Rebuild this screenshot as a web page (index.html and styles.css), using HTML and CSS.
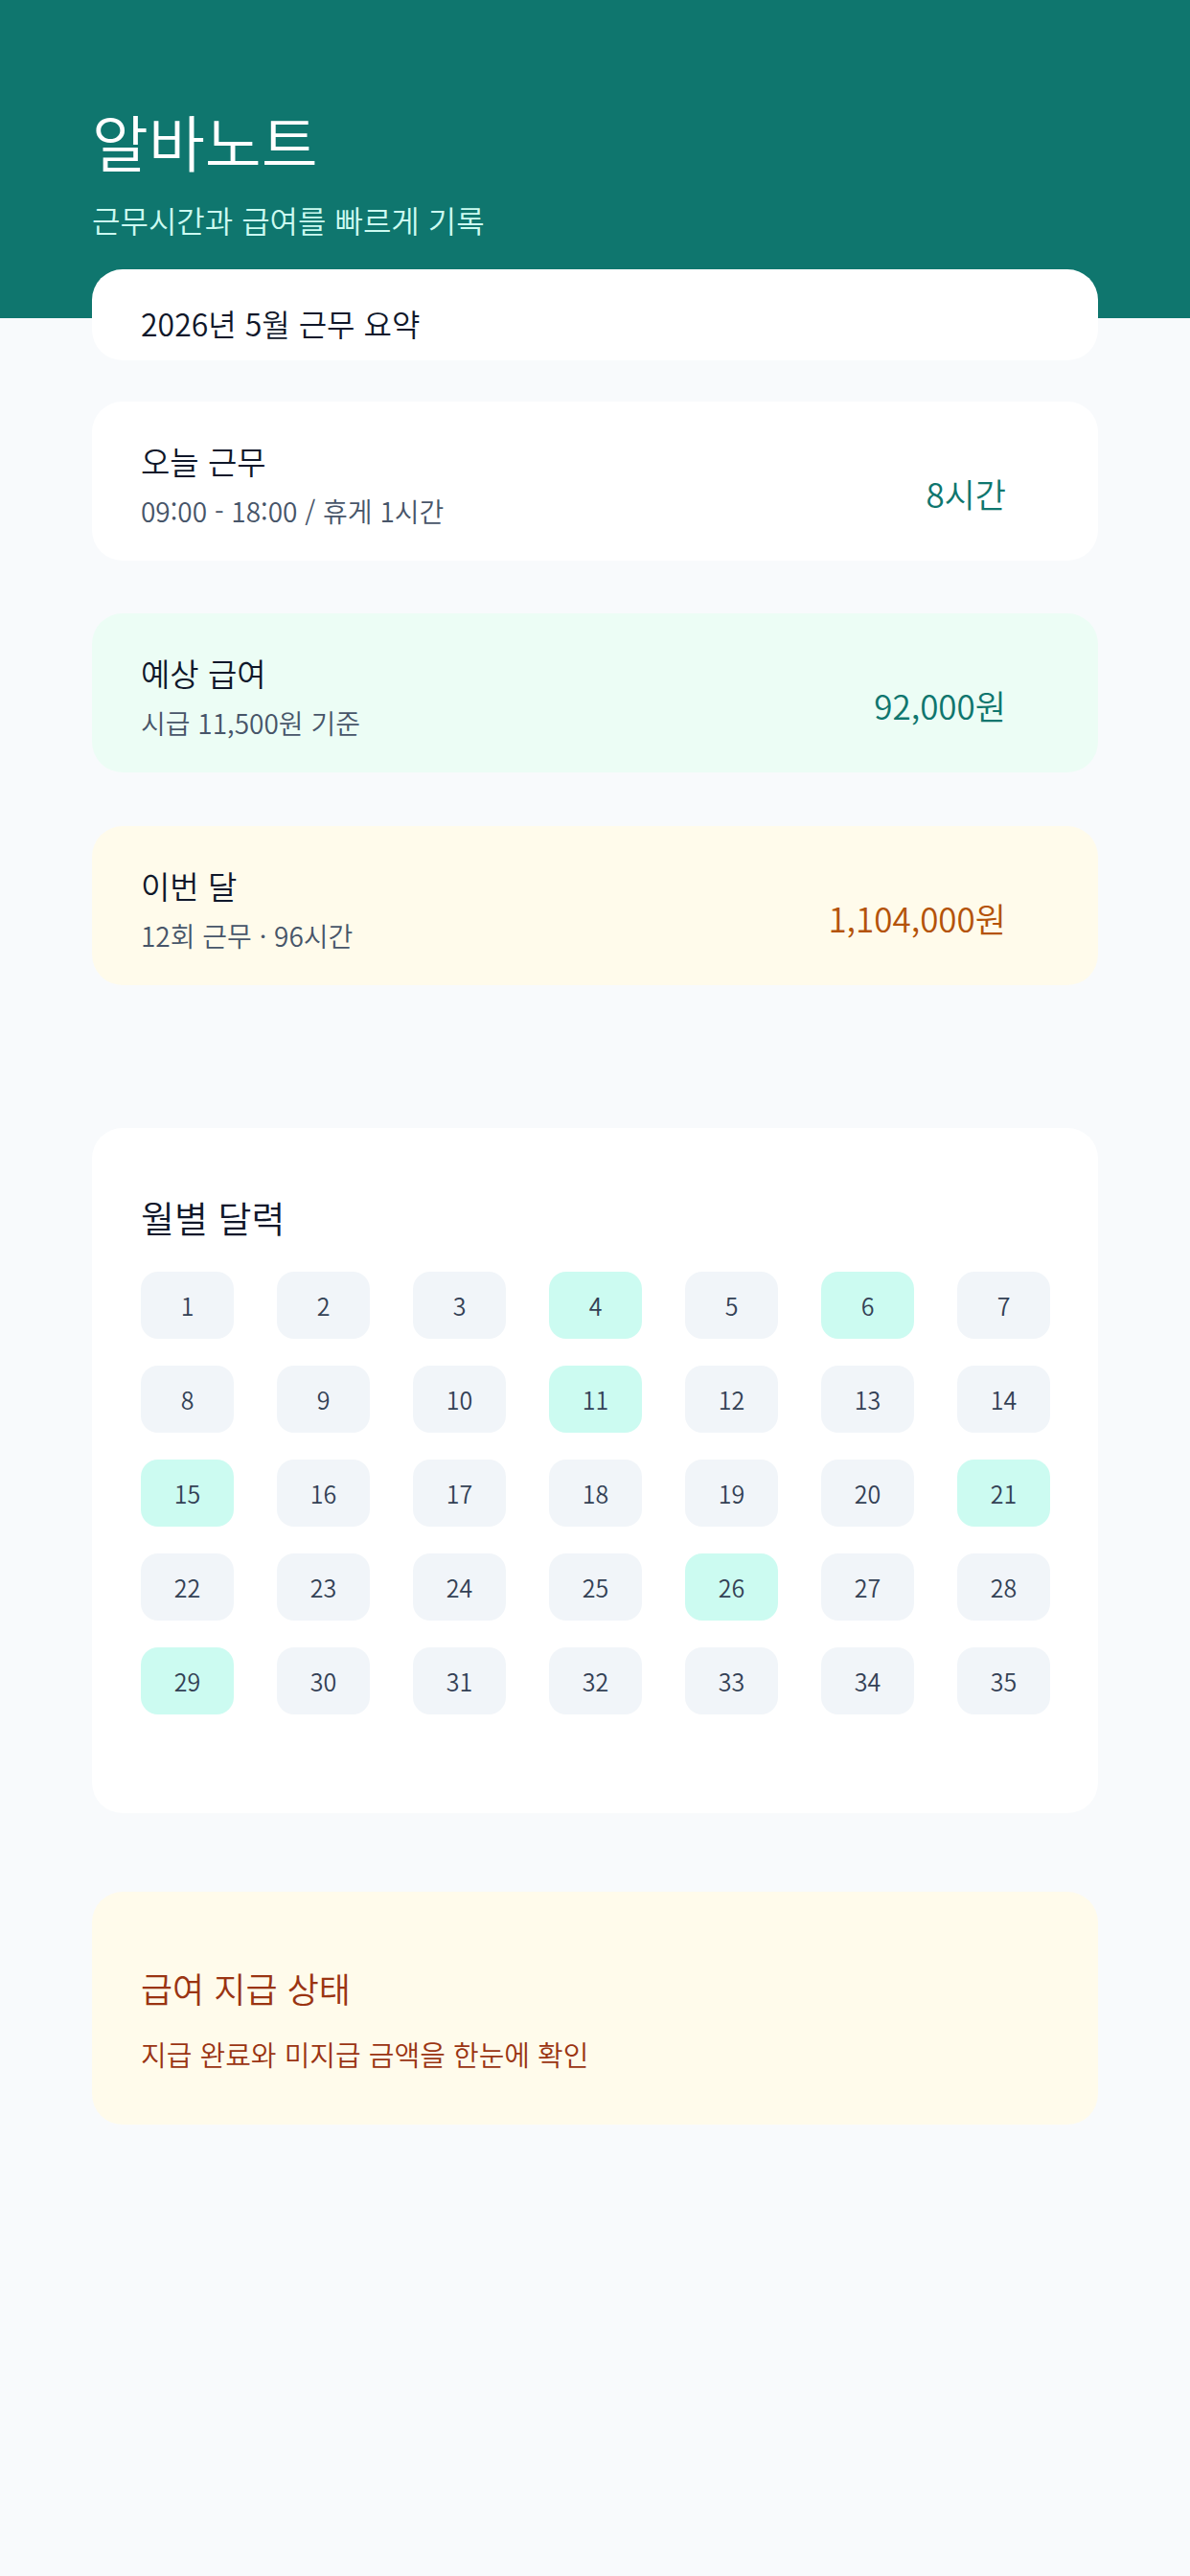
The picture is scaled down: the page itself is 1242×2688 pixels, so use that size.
FILE: index.html
```html
<!DOCTYPE html>
<html lang="ko">
<head>
  <meta charset="utf-8" />
  <title>알바노트</title>
  <meta name="viewport" content="width=device-width, initial-scale=1.0" />
  <link rel="stylesheet" href="styles.css">
</head>
<body>
  <header class="hero">
    <h1>알바노트</h1>
    <p>근무시간과 급여를 빠르게 기록</p>
  </header>

  <main class="content">
    <section class="card summary">2026년 5월 근무 요약</section>

    <section class="card stat today">
      <div>
        <div class="stat-title">오늘 근무</div>
        <div class="stat-sub">09:00 - 18:00 / 휴게 1시간</div>
      </div>
      <div class="stat-value teal">8시간</div>
    </section>

    <section class="card stat pay">
      <div>
        <div class="stat-title">예상 급여</div>
        <div class="stat-sub">시급 11,500원 기준</div>
      </div>
      <div class="stat-value teal">92,000원</div>
    </section>

    <section class="card stat month">
      <div>
        <div class="stat-title">이번 달</div>
        <div class="stat-sub">12회 근무 · 96시간</div>
      </div>
      <div class="stat-value orange">1,104,000원</div>
    </section>

    <section class="card calendar">
      <h2>월별 달력</h2>
      <div class="grid" id="grid"></div>
    </section>

    <section class="card status">
      <h2>급여 지급 상태</h2>
      <p>지급 완료와 미지급 금액을 한눈에 확인</p>
    </section>
  </main>

  <script>
    const worked = [4, 6, 11, 15, 21, 26, 29];
    const grid = document.getElementById("grid");
    for (let d = 1; d <= 35; d++) {
      const cell = document.createElement("div");
      cell.className = worked.includes(d) ? "day on" : "day";
      cell.textContent = d;
      grid.appendChild(cell);
    }
  </script>
</body>
</html>
```

FILE: styles.css
```css
body { margin: 0; background: #f8fafc; font-family: "Noto Sans CJK KR", "Noto Sans", sans-serif; font-weight: 350; color: #0f172a; }
h1, h2 { font-weight: 350; }

.hero { background: #0f766e; padding: 108px 96px 80px; }
.hero h1 { margin: 0; font-size: 64px; line-height: 76px; color: #fff; }
.hero p { margin: 22px 0 0; font-size: 32px; line-height: 46px; color: #ccfbf1; }

.content { padding: 0 96px 200px; margin-top: -51px; }
.card { background: #fff; border-radius: 32px; }

.summary { padding: 34px 51px 16px; font-size: 32px; line-height: 45px; }

.stat { display: flex; justify-content: space-between; align-items: center; padding: 40px 96px 32px 51px; }
.stat-title { font-size: 33px; line-height: 45px; }
.stat-sub { margin-top: 9px; font-size: 28px; line-height: 40px; color: #475569; }
.stat-value { margin-top: 18px; font-size: 35px; line-height: 48px; }
.teal { color: #0f766e; }
.orange { color: #b45309; }

.today { margin-top: 43px; }
.pay { margin-top: 55px; background: #ecfdf5; }
.month { margin-top: 56px; background: #fffbeb; }

.calendar { margin-top: 149px; padding: 68px 50px 103px 51px; }
.calendar h2 { margin: 0; font-size: 38px; line-height: 50px; }
.grid { margin-top: 32px; display: grid; grid-template-columns: repeat(7, 1fr); column-gap: 45px; row-gap: 28px; }
.day { height: 70px; border-radius: 18px; background: #f1f5f9; display: flex; align-items: center; justify-content: center; font-size: 25px; color: #334155; }
.day.on { background: #ccfbf1; }

.status { margin-top: 82px; padding: 76px 51px 54px; background: #fffbeb; color: #9a3412; }
.status h2 { margin: 0; font-size: 36px; line-height: 48px; }
.status p { margin: 25px 0 0; font-size: 29px; line-height: 40px; }
```
